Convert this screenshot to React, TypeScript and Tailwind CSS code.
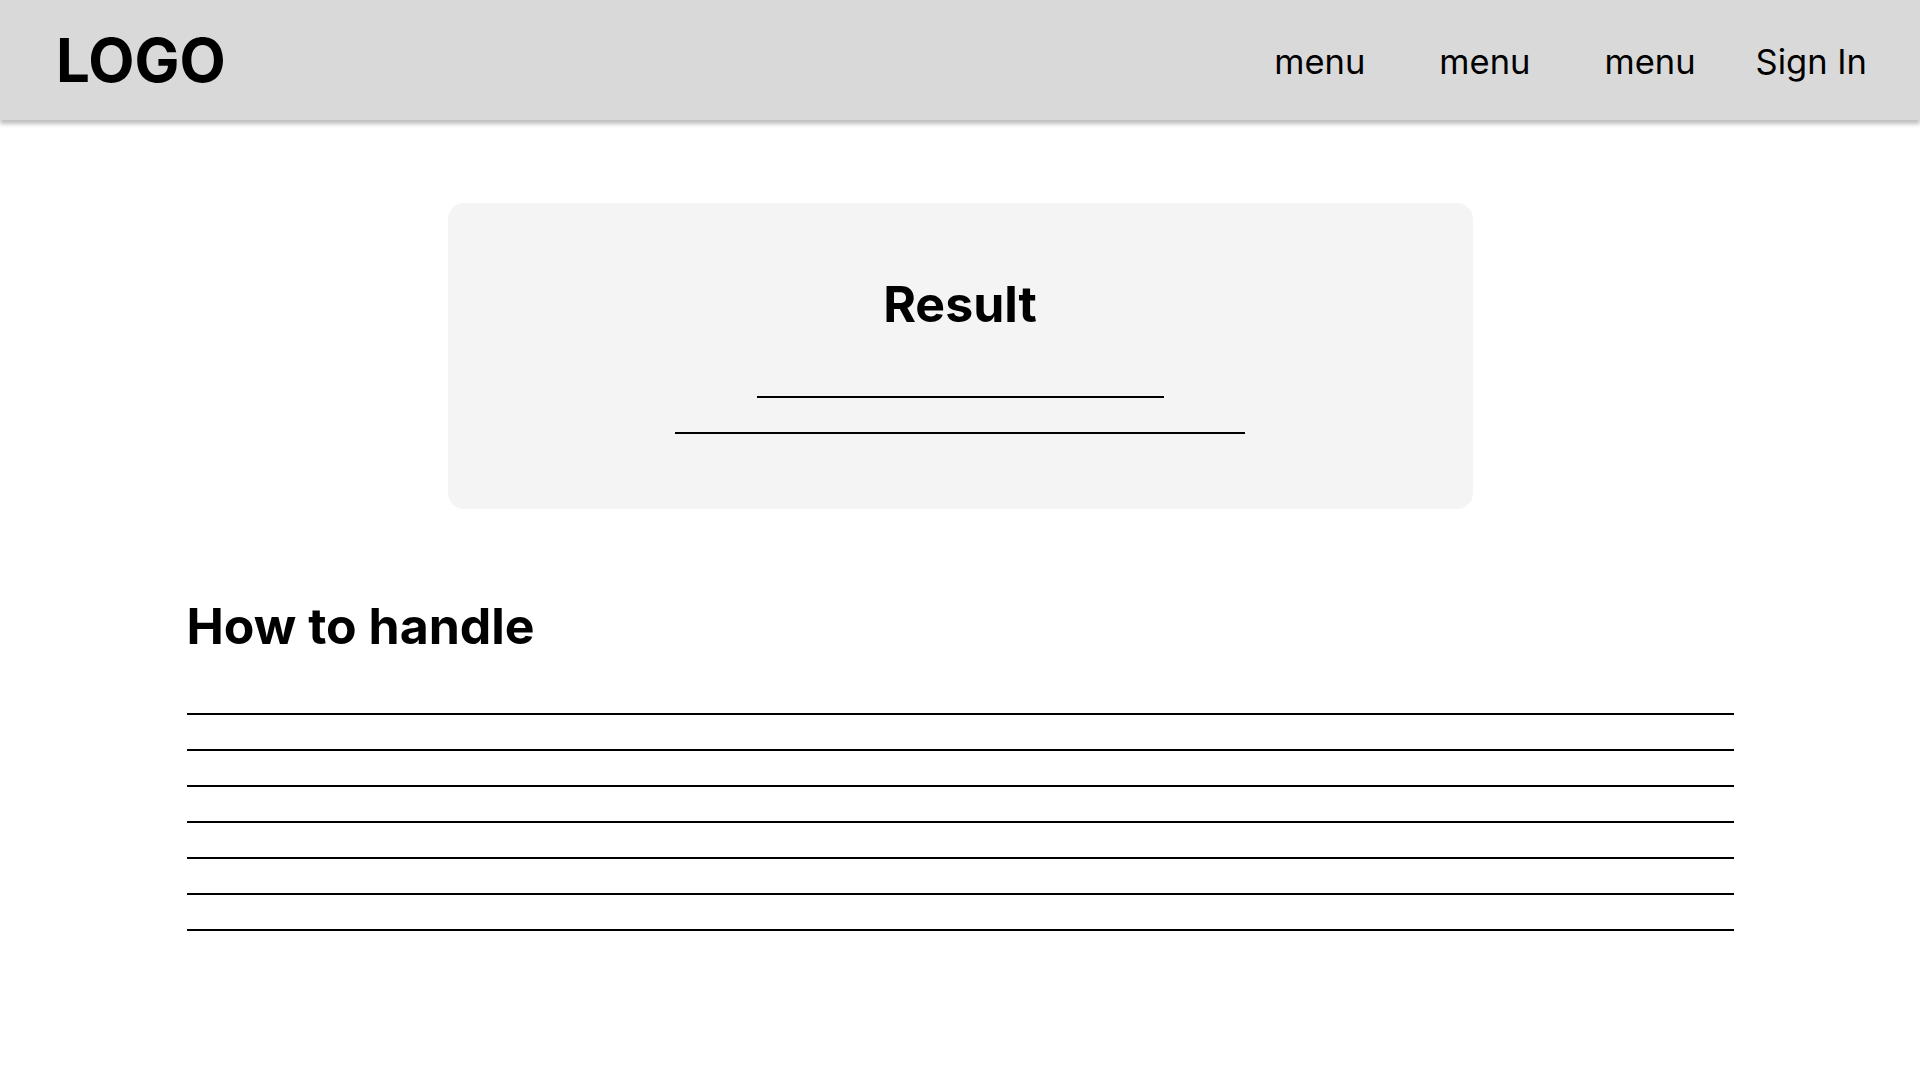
export default function App() {
  const navItems = ["menu", "menu", "menu"];
  const lines = [0, 1, 2, 3, 4, 5, 6];

  return (
    <div className="min-h-screen w-full bg-white text-black font-['Inter',sans-serif]">
      {/* Header */}
      <header className="relative z-10 flex h-[120px] items-center justify-between bg-[#d9d9d9] pl-14 pr-[53px] shadow-[0_4px_4px_rgba(0,0,0,0.25)]">
        <div className="text-[60px] font-bold leading-none">LOGO</div>
        <nav className="mt-[4px] flex items-center text-[34.5px] leading-none">
          <div className="flex items-center gap-[74px]">
            {navItems.map((item, i) => (
              <a key={i} href="#" className="block">
                {item}
              </a>
            ))}
          </div>
          <a href="#" className="ml-[60px] block">
            Sign In
          </a>
        </nav>
      </header>

      {/* Result card */}
      <section className="mx-auto mt-[83px] flex w-[1025px] flex-col items-center rounded-2xl bg-[#f4f4f4] pt-[76px] pb-[75px]">
        <h1 className="text-[50px] font-bold leading-none">Result</h1>
        <div className="mt-[67px] h-[2px] w-[407px] bg-black" />
        <div className="mt-[34px] h-[2px] w-[570px] bg-black" />
      </section>

      {/* How to handle */}
      <section className="mx-auto mt-[92px] w-[1547px]">
        <h2 className="text-[50px] font-bold leading-none">How to handle</h2>
        <div className="mt-[62px] flex flex-col gap-[34px]">
          {lines.map((l) => (
            <div key={l} className="h-[2px] w-full bg-black" />
          ))}
        </div>
      </section>
    </div>
  );
}
